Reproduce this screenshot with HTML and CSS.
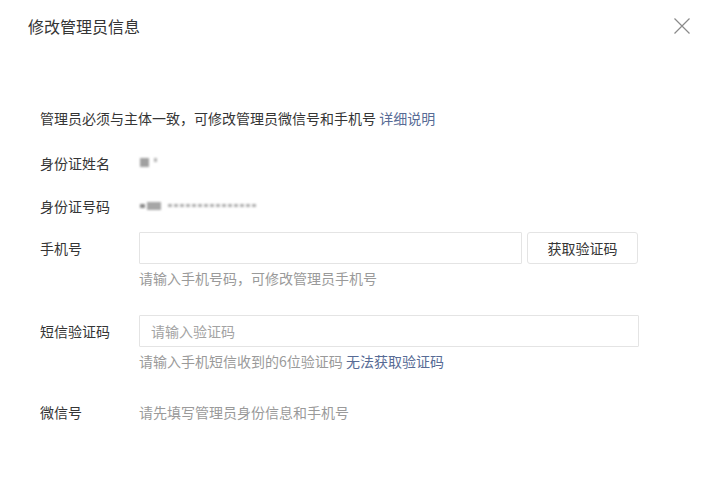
FILE: index.html
```html
<!DOCTYPE html>
<html lang="zh-CN">
<head>
<meta charset="utf-8">
<title>修改管理员信息</title>
<link rel="stylesheet" href="styles.css">
</head>
<body>
<div class="dialog">
  <div class="dialog-header">
    <h3 class="dialog-title">修改管理员信息</h3>
    <button class="dialog-close" aria-label="关闭">
      <svg width="16" height="16" viewBox="0 0 16 16"><path d="M0.5 0.5 L15.5 15.5 M15.5 0.5 L0.5 15.5" stroke="#8a8a8a" stroke-width="1.2" fill="none"/></svg>
    </button>
  </div>
  <div class="dialog-body">
    <p class="intro">管理员必须与主体一致，可修改管理员微信号和手机号 <a class="link" href="#">详细说明</a></p>
    <div class="form-row row-name">
      <label class="form-label">身份证姓名</label>
      <div class="form-value"><span class="blur blur-name-a"></span><span class="blur blur-name-b"></span></div>
    </div>
    <div class="form-row row-id">
      <label class="form-label">身份证号码</label>
      <div class="form-value"><span class="blur blur-id-a"></span><span class="blur blur-id-b"></span><span class="blur blur-id-c"></span></div>
    </div>
    <div class="form-row row-phone">
      <label class="form-label">手机号</label>
      <div class="form-control">
        <div class="input-group">
          <input class="input input-phone" type="text">
          <button class="btn">获取验证码</button>
        </div>
        <p class="tips">请输入手机号码，可修改管理员手机号</p>
      </div>
    </div>
    <div class="form-row row-code">
      <label class="form-label">短信验证码</label>
      <div class="form-control">
        <input class="input input-code" type="text" placeholder="请输入验证码">
        <p class="tips">请输入手机短信收到的6位验证码 <a class="link" href="#">无法获取验证码</a></p>
      </div>
    </div>
    <div class="form-row row-wechat">
      <label class="form-label">微信号</label>
      <div class="form-value muted">请先填写管理员身份信息和手机号</div>
    </div>
  </div>
</div>
</body>
</html>
```

FILE: styles.css
```css
* { box-sizing: border-box; }
html, body {
  margin: 0;
  padding: 0;
  background: #fff;
}
body {
  font-family: "Noto Sans CJK SC", "Noto Sans", sans-serif;
  font-size: 14px;
  color: #353535;
  width: 721px;
  height: 484px;
  overflow: hidden;
}
.dialog { width: 721px; }
.dialog-header {
  display: flex;
  align-items: center;
  justify-content: space-between;
  height: 52px;
  padding: 0 31px 0 28px;
}
.dialog-title {
  margin: 0;
  font-size: 16px;
  font-weight: normal;
  line-height: 22px;
  color: #353535;
}
.dialog-close {
  border: 0;
  background: none;
  padding: 0;
  width: 16px;
  height: 16px;
  display: flex;
  cursor: pointer;
}
.dialog-body {
  padding: 56px 0 0 40px;
}
.intro {
  margin: 0;
  line-height: 20px;
  color: #353535;
}
.link { color: #576b95; text-decoration: none; }
.form-row {
  display: flex;
  align-items: flex-start;
}
.form-label {
  width: 99px;
  flex: none;
  line-height: 20px;
  color: #353535;
}
.form-value { line-height: 20px; }
.row-name, .row-id { height: 20px; }
.row-name .form-value,
.row-id .form-value {
  display: flex;
  align-items: center;
  height: 20px;
  padding-left: 1px;
}
.row-name { margin-top: 25px; }
.row-id { margin-top: 23px; }
.row-phone { margin-top: 16px; }
.row-code { margin-top: 27px; }
.row-wechat { margin-top: 31px; }
.row-phone .form-label,
.row-code .form-label { padding-top: 6px; }
.blur {
  display: block;
  filter: blur(0.8px);
  background: #9a9a9a;
}
.blur-name-a { width: 9px; height: 9px; background: #a0a0a0; margin-top: -2px; }
.blur-name-b { width: 3px; height: 4px; background: #b5b5b5; margin-left: 5px; margin-top: -7px; }
.blur-id-a { width: 5px; height: 4px; background: #888; margin-top: 0; }
.blur-id-b { width: 14px; height: 8px; background: #a6a6a6; margin-left: 2px; }
.blur-id-c {
  width: 89px;
  height: 3px;
  margin-left: 7px;
  margin-top: -1px;
  background: repeating-linear-gradient(to right, #b0b0b0 0 4px, transparent 4px 6px);
}
.input-group { display: flex; gap: 5px; }
.input {
  height: 32px;
  border: 1px solid #e4e4e4;
  border-radius: 1px;
  padding: 0 11px;
  font-family: inherit;
  font-size: 14px;
  color: #353535;
  outline: none;
  background: #fff;
}
.input::placeholder { color: #a3a3a3; }
.input-phone { width: 383px; }
.input-code { width: 500px; display: block; }
.btn {
  width: 111px;
  height: 32px;
  border: 1px solid #e4e4e4;
  border-radius: 3px;
  background: #fff;
  font-family: inherit;
  font-size: 14px;
  color: #353535;
  padding: 0;
}
.tips {
  margin: 4px 0 0;
  line-height: 20px;
  color: #9a9a9a;
}
.muted { color: #9a9a9a; }
```
